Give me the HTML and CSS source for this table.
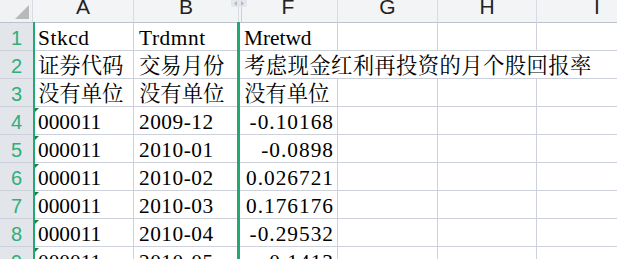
FILE: index.html
```html
<!DOCTYPE html>
<html lang="zh-CN">
<head>
<meta charset="utf-8">
<title>Sheet</title>
<link rel="stylesheet" href="styles.css">
</head>
<body>
<div class="sheet">
  <div class="grid">
    <div class="corner"><span class="corner-tri"></span></div>
    <div class="colhdr">A</div>
    <div class="colhdr">B</div>
    <div class="colhdr colhdr-hidden">
      <svg class="unhide" width="16" height="7" viewBox="0 0 16 7" aria-hidden="true">
        <rect x="0" y="-3" width="16" height="10" rx="2" fill="#e3e6eb"/>
        <path d="M6 1 L3 3.5 L6 6 Z" fill="#b4b9c2"/>
        <path d="M10 1 L13 3.5 L10 6 Z" fill="#b4b9c2"/>
      </svg>
      F
    </div>
    <div class="colhdr">G</div>
    <div class="colhdr">H</div>
    <div class="colhdr colhdr-last">I</div>

    <div class="rowhdr">1</div>
    <div class="cell cell-word">Stkcd</div>
    <div class="cell cell-word">Trdmnt</div>
    <div class="cell">Mretwd</div>
    <div class="cell"></div>
    <div class="cell"></div>
    <div class="cell cell-last"></div>

    <div class="rowhdr">2</div>
    <div class="cell">证券代码</div>
    <div class="cell">交易月份</div>
    <div class="cell cell-overflow">考虑现金红利再投资的月个股回报率</div>

    <div class="rowhdr">3</div>
    <div class="cell">没有单位</div>
    <div class="cell">没有单位</div>
    <div class="cell">没有单位</div>
    <div class="cell"></div>
    <div class="cell"></div>
    <div class="cell cell-last"></div>

    <div class="rowhdr">4</div>
    <div class="cell cell-text">000011</div>
    <div class="cell cell-date">2009-12</div>
    <div class="cell cell-num">-0.10168</div>
    <div class="cell"></div>
    <div class="cell"></div>
    <div class="cell cell-last"></div>

    <div class="rowhdr">5</div>
    <div class="cell cell-text">000011</div>
    <div class="cell cell-date">2010-01</div>
    <div class="cell cell-num">-0.0898</div>
    <div class="cell"></div>
    <div class="cell"></div>
    <div class="cell cell-last"></div>

    <div class="rowhdr">6</div>
    <div class="cell cell-text">000011</div>
    <div class="cell cell-date">2010-02</div>
    <div class="cell cell-num">0.026721</div>
    <div class="cell"></div>
    <div class="cell"></div>
    <div class="cell cell-last"></div>

    <div class="rowhdr">7</div>
    <div class="cell cell-text">000011</div>
    <div class="cell cell-date">2010-03</div>
    <div class="cell cell-num">0.176176</div>
    <div class="cell"></div>
    <div class="cell"></div>
    <div class="cell cell-last"></div>

    <div class="rowhdr">8</div>
    <div class="cell cell-text">000011</div>
    <div class="cell cell-date">2010-04</div>
    <div class="cell cell-num">-0.29532</div>
    <div class="cell"></div>
    <div class="cell"></div>
    <div class="cell cell-last"></div>

    <div class="rowhdr">9</div>
    <div class="cell cell-text">000011</div>
    <div class="cell cell-date">2010-05</div>
    <div class="cell cell-num">-0.1413</div>
    <div class="cell"></div>
    <div class="cell"></div>
    <div class="cell cell-last"></div>
  </div>
  <div class="selection"></div>
</div>
</body>
</html>
```
FILE: styles.css
```css
html, body {
  margin: 0;
  padding: 0;
  background: #ffffff;
  overflow: hidden;
}

.sheet {
  position: relative;
  width: 617px;
  height: 259px;
  overflow: hidden;
}

.grid {
  display: grid;
  grid-template-columns: 33px 101px 105px 99px 100px 99px 120px;
  grid-template-rows: 23px repeat(9, 28px);
}

.corner {
  background: #f1f2f4;
  border-bottom: 1px solid #bcc2ce;
  border-right: 1px solid #d8dbe1;
  display: flex;
  justify-content: flex-end;
  align-items: flex-end;
  padding: 0 2px 3px 0;
}

.corner-tri {
  width: 0;
  height: 0;
  border-left: 14px solid transparent;
  border-bottom: 14px solid #b7b9bd;
  margin-right: 1px;
}

.colhdr {
  position: relative;
  background: #f3f4f6;
  border-bottom: 1px solid #bcc2ce;
  border-right: 1px solid #d8dbe1;
  font-family: "Liberation Sans", Arial, sans-serif;
  font-size: 21px;
  line-height: 14px;
  color: #222222;
  text-align: center;
}

.colhdr-hidden::before {
  content: "";
  position: absolute;
  left: 2px;
  top: 0;
  bottom: 0;
  border-left: 1px solid #c9ced8;
}

.unhide {
  position: absolute;
  left: -8px;
  top: 0;
}

.colhdr-last {
  border-right: none;
}

.rowhdr {
  background: #e2e5e9;
  border-bottom: 1px solid #ccd1db;
  font-family: "Liberation Sans", Arial, sans-serif;
  font-size: 20px;
  line-height: 20px;
  padding-top: 5px;
  color: #2fae7c;
  text-align: center;
  box-sizing: border-box;
}

.cell {
  position: relative;
  border-bottom: 1px solid #ccd1dc;
  border-right: 1px solid #ccd1dc;
  font-family: "Liberation Serif", "Noto Serif CJK SC", "Noto Sans CJK SC", serif;
  font-size: 21.33px;
  line-height: 21.33px;
  padding: 5px 3px 0 5px;
  color: #000000;
  white-space: nowrap;
  overflow: hidden;
  box-sizing: border-box;
}

.cell-word {
  letter-spacing: 0.6px;
}

.cell-date {
  letter-spacing: 0.5px;
}

.cell-last {
  border-right: none;
}

.cell-overflow {
  grid-column: span 4;
  border-right: none;
  overflow: visible;
  letter-spacing: 0.4px;
}

.cell-num {
  text-align: right;
  padding-right: 3px;
  letter-spacing: 1px;
}

.cell-text::before {
  content: "";
  position: absolute;
  left: 2px;
  top: 1px;
  width: 0;
  height: 0;
  border-top: 4px solid #1b7f3a;
  border-right: 4px solid transparent;
}

.selection {
  position: absolute;
  left: 33px;
  top: 22px;
  width: 202px;
  bottom: 0;
  border-left: 2px solid #22a872;
  border-right: 3px solid #22a872;
  pointer-events: none;
}
```
